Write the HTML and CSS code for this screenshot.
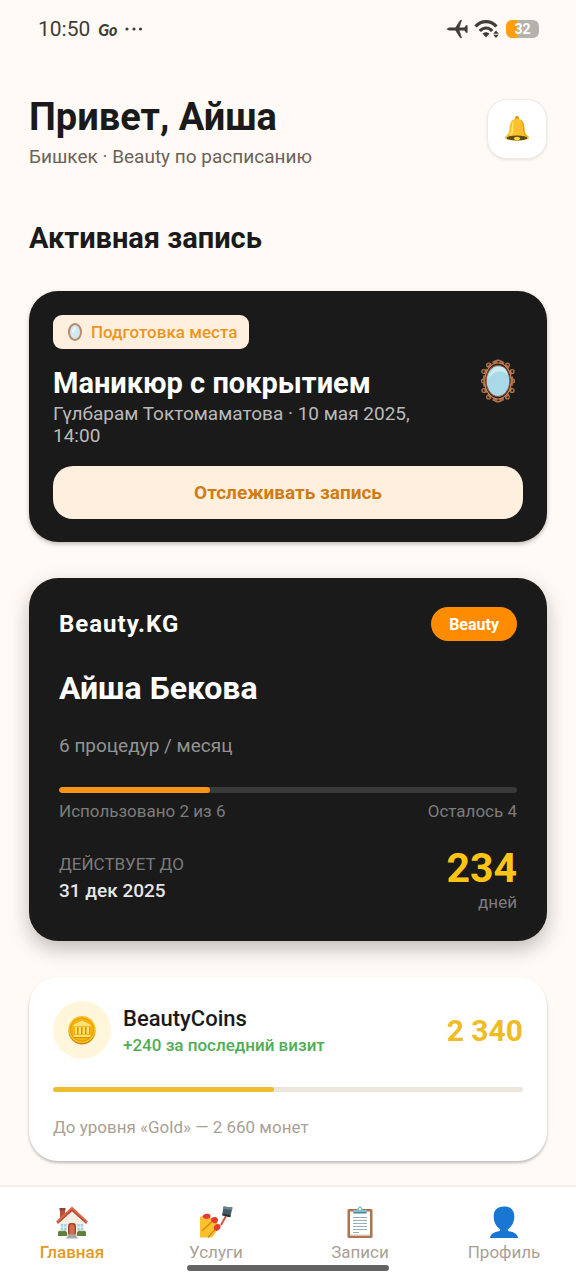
FILE: index.html
```html
<!DOCTYPE html>
<html lang="ru">
<head>
    <meta charset="UTF-8">
    <meta name="viewport" content="width=device-width, initial-scale=1.0">
    <title>Beauty.KG</title>
    <link rel="stylesheet" href="styles.css">
</head>
<body>
    <!-- mirror drawings: plain one for the badge, ornate one for the card -->
    <svg class="sprite" aria-hidden="true">
        <symbol id="mirror-small" viewBox="0 0 16 20">
            <ellipse cx="8" cy="10" rx="6" ry="8" fill="#cfe9f1" stroke="#b98a6c" stroke-width="2"/>
            <path d="M5 10c0-3 1.500-4.500 4-5-.5 3-2 4.500-4 6z" fill="#eef8fb"/>
        </symbol>
        <symbol id="mirror" viewBox="0 0 36 46">
            <ellipse cx="18" cy="23" rx="15" ry="20" fill="none" stroke="#a5673f" stroke-width="2.500" stroke-dasharray="5 2"/>
            <ellipse cx="18" cy="23" rx="14" ry="19" fill="none" stroke="#c98354" stroke-width="1.200"/>
            <g fill="none" stroke="#b9744a" stroke-width="1.400">
                <path d="M18 1c-3 0-4 2-6 2M18 1c3 0 4 2 6 2M18 45c-3 0-4-2-6-2M18 45c3 0 4-2 6-2"/>
                <circle cx="8" cy="6" r="2"/><circle cx="28" cy="6" r="2"/>
                <circle cx="3" cy="13" r="2"/><circle cx="33" cy="13" r="2"/>
                <circle cx="2" cy="23" r="1.600"/><circle cx="34" cy="23" r="1.600"/>
                <circle cx="3" cy="33" r="2"/><circle cx="33" cy="33" r="2"/>
                <circle cx="8" cy="40" r="2"/><circle cx="28" cy="40" r="2"/>
            </g>
            <ellipse cx="18" cy="23" rx="12.500" ry="16.500" fill="#a9d8e8" stroke="#8e5638" stroke-width="1.200"/>
            <path d="M8 22C8 13 13 8 20 8c6 0 8 5 8 9-3-4-8-5-12-3-4 1-7 4-8 8z" fill="#cdeaf3"/>
        </symbol>
    </svg>

    <div class="status-bar">
        <span class="time">10:50</span>
        <span class="carrier">Go</span>
        <svg class="dots" viewBox="0 0 18 4" aria-hidden="true"><g fill="#403c38"><circle cx="2" cy="2" r="1.600"/><circle cx="9" cy="2" r="1.600"/><circle cx="15.500" cy="2" r="1.600"/></g></svg>
        <div class="status-icons">
            <svg width="22" height="20" viewBox="0 0 22 20" aria-hidden="true">
                <path d="M.8 10 3 8.800h6.500L14 1.500l1.600-.5L13.200 8.800h5.300L20 6.500h1.300v7H20l-1.500-2.300h-5.300l2.400 7.800-1.600-.5-4.500-7.300H3z" fill="#403c38" stroke="#403c38" stroke-width=".5" stroke-linejoin="round"/>
            </svg>
            <svg width="26" height="20" viewBox="0 0 26 20" aria-hidden="true">
                <g fill="none" stroke="#403c38" stroke-width="3.200">
                    <path d="M1.500 7.500C7.500 1 16.500 1 22.500 7.500"/>
                    <path d="M5.800 12c3.500-4 9-4 12.400 0"/>
                </g>
                <path d="M8.500 14.800c2-2 5-2 7 0L12 18.500z" fill="#403c38"/>
                <path d="M22 11.500l2.800 3.200h-5.600zM22 19l2.800-3.200h-5.600z" fill="#403c38"/>
            </svg>
            <div class="battery"><span>32</span></div>
        </div>
    </div>

    <main>
        <header class="header">
            <div>
                <h1>Привет, Айша</h1>
                <p class="subtitle">Бишкек · Beauty по расписанию</p>
            </div>
            <button type="button" class="bell-btn" aria-label="Уведомления">
                <svg width="28" height="28" viewBox="0 0 28 28" aria-hidden="true">
                    <path d="M12 3.500C12 1.500 13 1 14 1s2 .5 2 2.500l-.5 1.500h-3z" fill="#d99a12"/>
                    <path d="M14 3.500c-5 0-7 3.700-7.300 8.500C6.400 17.500 5.500 19 2.500 21.500c-1 1-.5 2.300 1 2.700 6.500 1.900 14.500 1.900 21 0 1.500-.4 2-1.700 1-2.700-3-2.500-3.900-4-4.200-9.500C21 7.200 19 3.500 14 3.500z" fill="#fbc02d"/>
                    <path d="M11 5.500C8.500 7.500 9 12 8.300 16c-.3 1.700-1 3-2 4.200 3 .4 3.700-1.200 4-4.200.4-4-.3-7.500.7-10.500z" fill="#ffe161"/>
                    <path d="M17 4.500c2.500 2 2.600 5 2.800 9 .1 3 1 5.500 2.700 7.500l2.500 1c-3.500-3-3.500-5.500-3.700-10C21.100 8 19.500 5.300 17 4.500z" fill="#eda600"/>
                    <ellipse cx="14" cy="23" rx="10.500" ry="2.600" fill="#5d4a16"/>
                    <ellipse cx="14" cy="23.600" rx="3" ry="1.800" fill="#fdd835"/>
                </svg>
            </button>
        </header>

        <h2>Активная запись</h2>

        <section class="card booking">
            <div class="booking-top">
                <div>
                    <span class="badge"><svg width="16" height="20" aria-hidden="true"><use href="#mirror-small"/></svg>Подготовка места</span>
                    <h3>Маникюр с покрытием</h3>
                    <p class="booking-info">Гүлбарам Токтомаматова · 10 мая 2025, 14:00</p>
                </div>
                <svg class="booking-icon" aria-hidden="true"><use href="#mirror"/></svg>
            </div>
            <button type="button" class="track-btn">Отслеживать запись</button>
        </section>

        <section class="card pass">
            <div class="row">
                <span class="brand">Beauty.KG</span>
                <span class="tag">Beauty</span>
            </div>
            <h3 class="pass-name">Айша Бекова</h3>
            <p class="pass-plan">6 процедур / месяц</p>
            <div class="progress"><div class="progress-fill" style="width: 33%"></div></div>
            <div class="row pass-usage">
                <span>Использовано 2 из 6</span>
                <span>Осталось 4</span>
            </div>
            <div class="row pass-bottom">
                <div>
                    <div class="pass-label">ДЕЙСТВУЕТ ДО</div>
                    <div class="pass-date">31 дек 2025</div>
                </div>
                <div class="days">
                    <div class="days-count">234</div>
                    <div class="days-label">дней</div>
                </div>
            </div>
        </section>

        <section class="card coins">
            <div class="row">
                <div class="coin-icon">
                    <svg width="30" height="30" viewBox="0 0 30 30" aria-hidden="true">
                        <circle cx="15" cy="16" r="13.500" fill="#c98a10"/>
                        <circle cx="15" cy="14.500" r="13.500" fill="#fbc01c"/>
                        <circle cx="15" cy="14.500" r="11.500" fill="#f5b312" stroke="#e09c0a"/>
                        <g fill="#ffe07a">
                            <path d="M15 5.500l8.500 4.200v1.500h-17V9.700z"/>
                            <path d="M8 12h2.200v7H8zM12 12h2.200v7H12zM16 12h2.200v7H16zM20 12h2.200v7H20zM6.500 20h17v2h-17z"/>
                        </g>
                        <path d="M10.500 12v7M14.500 12v7M18.500 12v7M22.500 12v7M6.500 22.500h17" stroke="#c98a10" stroke-width=".7"/>
                    </svg>
                </div>
                <div class="coin-text">
                    <h3>BeautyCoins</h3>
                    <p>+240 за последний визит</p>
                </div>
                <span class="coin-count">2 340</span>
            </div>
            <div class="progress"><div class="progress-fill" style="width: 47%"></div></div>
            <p class="coin-note">До уровня «Gold» — 2 660 монет</p>
        </section>
    </main>

    <nav class="tabs">
        <a href="#" class="tab active">
            <svg width="34" height="34" viewBox="0 0 34 34" aria-hidden="true">
                <path d="M5 4h5v10H5z" fill="#b5523a"/><path d="M4.500 3h6v2.500h-6z" fill="#8d4233"/>
                <path d="M17 5 5 16v14h24V16z" fill="#f7efe4"/>
                <path d="M17 1.500 1 16.500l2 2L17 6l14 12.500 2-2z" fill="#e2694a"/>
                <path d="M17 4 2 18l1 .8L17 6.200l14 12.600 1-.8z" fill="#b54a35"/>
                <rect x="13" y="18" width="8" height="12.500" rx="3" fill="#a4452f"/>
                <rect x="14.500" y="19.500" width="5" height="11" rx="2" fill="#d0704a"/>
                <path d="M6 19h5.500v6.500H6zM22.500 19H28v6.500h-5.500z" fill="#9fd0df"/>
                <path d="M8.700 19v6.500M6 22h5.500M25.200 19v6.500M22.500 22H28" stroke="#fff" stroke-width=".8"/>
                <path d="M3 31v-3.500c0-2 3-2.500 4-1 1-1 4-1 5 1V31zM22 31v-3.500c1-2 4-2 5-1 1-1.500 4-1 4 1V31z" fill="#5f7f3a"/>
                <path d="M12.500 29.500h9V32h1v1.500h-11V32h1z" fill="#a8a8a8"/>
            </svg>
            Главная
        </a>
        <a href="#" class="tab">
            <svg width="34" height="34" viewBox="0 0 34 34" aria-hidden="true">
                <path d="M1 12c2-1.500 5-1 7 0l5 1 6 6 1 4-7 9.500H1z" fill="#fbc02d"/>
                <path d="M13.500 16 3 26M18 22 9 32.500" fill="none" stroke="#d58a10" stroke-width="1.300"/>
                <path d="M4 10.500c1.500-2 6-2.200 7.300-.5.800 2.500-1 3.800-3.500 3.800S3 12.700 4 10.500z" fill="#e53935"/>
                <path d="M12 14.500c0-2 3.500-3 5.500-2s2 3.800.2 5.200-5.700 0-5.700-3.200z" fill="#e53935"/>
                <path d="M15 22c.7-2.500 3.500-4 5.700-2.500s.3 5-1.700 6-4.800-.7-4-3.500z" fill="#e53935"/>
                <path d="M27 11l-5 9" stroke="#c9584b" stroke-width="2"/>
                <path d="M24.500 1.500 33.500 2.500l-2.300 9.800-8-2z" fill="#455a64"/>
                <path d="M24.500 1.500 33.500 2.500 33 5l-9-1z" fill="#6b828d"/>
                <path d="M23.700 8.500l8 1.800-.5 2-8-2z" fill="#263238"/>
            </svg>
            Услуги
        </a>
        <a href="#" class="tab">
            <svg width="34" height="34" viewBox="0 0 34 34" aria-hidden="true">
                <rect x="4.500" y="4" width="25" height="29" rx="1.500" fill="#ae7450"/>
                <path d="M7 6.500h20v24H7z" fill="#fff"/>
                <path d="M7 29.500h20v1.500H7z" fill="#d7c7b9"/>
                <path d="M10 12.500h14M10 15.500h14M10 18.500h14M10 21.500h14M10 24.500h14M10 27.500h6" stroke="#8ca3b0" stroke-width=".9"/>
                <path d="M10.500 8V5h4c0-2 1-3.500 2.500-3.500S19.500 3 19.500 5h4v3z" fill="#7fc0d2"/>
                <path d="M10.500 7h13v1.500h-13z" fill="#4d8799"/>
                <circle cx="17" cy="4" r="1" fill="#fff"/>
            </svg>
            Записи
        </a>
        <a href="#" class="tab">
            <svg width="34" height="34" viewBox="0 0 34 34" aria-hidden="true">
                <path d="M17 1.500c-7 0-10.500 4-10.300 10.500.2 6 3 10 6.500 12.300 0 1.500-.7 2-2.200 2.300-4.500.9-7.500 2.500-8 6.400h28c-.5-3.900-3.500-5.500-8-6.400-1.500-.3-2.200-.8-2.200-2.300 3.500-2.300 6.300-6.300 6.500-12.300C27.500 5.500 24 1.500 17 1.500z" fill="#1976d2"/>
            </svg>
            Профиль
        </a>
        <div class="home-indicator"></div>
    </nav>
</body>
</html>
```
FILE: styles.css
```css
* {
    box-sizing: border-box;
}

body {
    font-family: Roboto, "Noto Sans", sans-serif;
    background-color: #fffaf5;
    color: #1a1a1a;
    margin: 0;
    min-height: 100vh;
    display: flex;
    flex-direction: column;
}

h1, h2, h3, p {
    margin: 0;
}

button {
    font-family: inherit;
    border: none;
    padding: 0;
    cursor: pointer;
}

.sprite {
    position: absolute;
    width: 0;
    height: 0;
}

/* status bar */
.status-bar {
    display: flex;
    align-items: center;
    height: 58px;
    padding: 0 37px 0 38px;
    color: #403c38;
}

.time {
    font-size: 21px;
}

.carrier {
    font-family: Lato, sans-serif;
    font-size: 16px;
    font-weight: 900;
    font-style: italic;
    margin-left: 8px;
}

.dots {
    width: 18px;
    height: 4px;
    margin-left: 8px;
}

.status-icons {
    display: flex;
    align-items: center;
    gap: 6px;
    margin-left: auto;
}

.battery {
    width: 33px;
    height: 18px;
    border-radius: 6px;
    background: linear-gradient(to right, #ff9f0a 32%, #b5b2ae 32%);
    color: #fff;
    font-size: 14px;
    font-weight: bold;
    line-height: 18px;
    text-align: center;
}

/* header */
main {
    flex: 1;
    padding: 41px 29px 24px;
}

.header {
    display: flex;
    justify-content: space-between;
    align-items: flex-start;
    margin-bottom: 46px;
}

h1 {
    font-size: 38px;
    line-height: 36px;
}

.subtitle {
    margin-top: 9px;
    font-size: 19px;
    line-height: 26px;
    color: #6b625a;
}

.bell-btn {
    width: 60px;
    height: 60px;
    border: 1px solid #f1ebe5;
    border-radius: 20px;
    background: #fff;
    box-shadow: 0 1px 3px rgba(0, 0, 0, 0.1);
    display: flex;
    align-items: center;
    justify-content: center;
}

h2 {
    font-size: 29px;
    line-height: 44px;
    margin-bottom: 31px;
}

/* cards */
.card {
    border-radius: 29px;
    padding: 24px;
    margin-bottom: 36px;
}

.card:last-child {
    margin-bottom: 0;
}

.row {
    display: flex;
    justify-content: space-between;
    align-items: center;
}

.progress {
    height: 6px;
    border-radius: 3px;
    overflow: hidden;
}

.progress-fill {
    height: 100%;
    border-radius: 3px;
}

/* active booking */
.booking {
    padding-bottom: 23px;
    background: #1a1a1a;
    box-shadow: 0 2px 4px rgba(0, 0, 0, 0.25);
}

.booking-top {
    display: flex;
    justify-content: space-between;
    align-items: center;
    gap: 48px;
    margin-bottom: 19px;
}

.booking-icon {
    flex: none;
    width: 34px;
    height: 44px;
    margin-right: 8px;
}

.badge {
    display: inline-flex;
    align-items: center;
    gap: 8px;
    height: 34px;
    padding: 0 12px 0 14px;
    border-radius: 9px;
    background: #ffefdf;
    color: #ed9520;
    font-size: 17px;
    font-weight: 500;
    vertical-align: top;
}

.booking h3 {
    margin-top: 14px;
    font-size: 29px;
    line-height: 40px;
    color: #fff;
}

.booking-info {
    font-size: 19px;
    line-height: 22px;
    color: #bababa;
}

.track-btn {
    width: 100%;
    height: 53px;
    border-radius: 20px;
    background: #ffefdf;
    color: #cf7d13;
    font-size: 19px;
    font-weight: bold;
}

/* membership card */
.pass {
    padding: 29px 30px 28px;
    background: #1a1a1a;
    box-shadow: 0 8px 20px rgba(0, 0, 0, 0.25);
}

.brand {
    font-size: 24px;
    font-weight: bold;
    letter-spacing: 1px;
    color: #fff;
}

.tag {
    height: 34px;
    line-height: 35px;
    padding: 0 18px;
    border-radius: 17px;
    background: #ff8c00;
    color: #fff;
    font-size: 16px;
    font-weight: bold;
}

.pass-name {
    margin-top: 26px;
    font-size: 32px;
    line-height: 42px;
    color: #fff;
}

.pass-plan {
    margin-top: 24px;
    font-size: 19px;
    line-height: 26px;
    color: #939393;
}

.pass .progress {
    margin-top: 28px;
    background: #3a3a3a;
}

.pass .progress-fill {
    background: #fb9316;
}

.pass-usage {
    margin-top: 8px;
    font-size: 17px;
    line-height: 20px;
    color: #7c7c7c;
}

.pass-bottom {
    margin-top: 24px;
}

.pass-label {
    font-size: 17px;
    line-height: 24px;
    color: #7c7c7c;
}

.pass-date {
    font-size: 19px;
    font-weight: 500;
    line-height: 30px;
    color: #e6e6e6;
}

.days {
    text-align: right;
}

.days-count {
    font-size: 41px;
    font-weight: bold;
    line-height: 46px;
    color: #ffc414;
}

.days-label {
    font-size: 17px;
    line-height: 22px;
    color: #7c7c7c;
}

/* coins */
.coins {
    padding-bottom: 23px;
    background: #fff;
    box-shadow: 0 2px 3px rgba(0, 0, 0, 0.25);
}

.coin-icon {
    flex: none;
    width: 58px;
    height: 58px;
    border-radius: 50%;
    background: #fff6dc;
    display: flex;
    align-items: center;
    justify-content: center;
}

.coin-text {
    flex: 1;
    margin-left: 12px;
}

.coins h3 {
    font-size: 22px;
    font-weight: 500;
    line-height: 30px;
}

.coin-text p {
    font-size: 17px;
    font-weight: 500;
    line-height: 22px;
    color: #4fae55;
}

.coin-count {
    font-size: 30px;
    font-weight: bold;
    color: #f0bc25;
}

.coins .progress {
    height: 5px;
    margin-top: 28px;
    background: #ece6dd;
}

.coins .progress-fill {
    background: #ecbd2e;
}

.coin-note {
    margin-top: 24px;
    font-size: 17px;
    line-height: 22px;
    color: #aa9f96;
}

/* bottom tabs */
.tabs {
    position: relative;
    display: flex;
    height: 95px;
    padding-top: 18px;
    border-top: 2px solid #f3eeea;
    background: #fff;
}

.tab {
    flex: 1;
    display: flex;
    flex-direction: column;
    align-items: center;
    gap: 1px;
    font-size: 17px;
    line-height: 24px;
    color: #aa9f96;
    text-decoration: none;
}

.tab.active {
    color: #e69a20;
    font-weight: 500;
}

.home-indicator {
    position: absolute;
    left: 0;
    right: 0;
    bottom: 9px;
    width: 35%;
    height: 6px;
    margin: 0 auto;
    border-radius: 3px;
    background: #646464;
}
```
